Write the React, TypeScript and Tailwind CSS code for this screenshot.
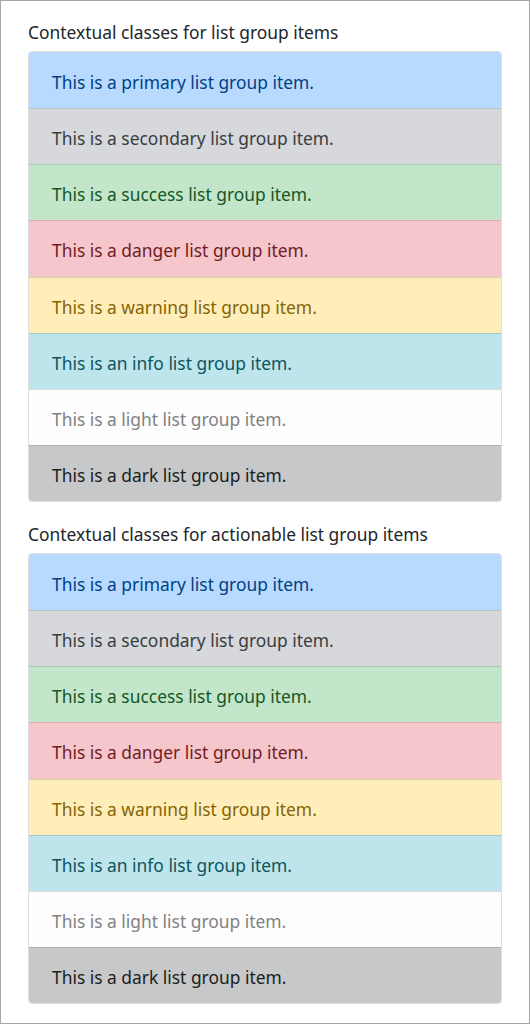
import React from "react";

const items = [
  { label: "This is a primary list group item.", cls: "bg-[#b8daff] text-[#004085]" },
  { label: "This is a secondary list group item.", cls: "bg-[#d6d8db] text-[#383d41]" },
  { label: "This is a success list group item.", cls: "bg-[#c3e6cb] text-[#155724]" },
  { label: "This is a danger list group item.", cls: "bg-[#f5c6cb] text-[#721c24]" },
  { label: "This is a warning list group item.", cls: "bg-[#ffeeba] text-[#856404]" },
  { label: "This is an info list group item.", cls: "bg-[#bee5eb] text-[#0c5460]" },
  { label: "This is a light list group item.", cls: "bg-[#fdfdfe] text-[#818182]" },
  { label: "This is a dark list group item.", cls: "bg-[#c6c8ca] text-[#1b1e21]" },
];

function Group({ title }: { title: string }) {
  return (
    <div>
      <h5 className="h-[24px] leading-[24px] text-[17.4px] text-[#212529] mb-[7px]">{title}</h5>
      <div className="flex flex-col rounded-[4px] overflow-hidden border border-black/[0.125]">
        {items.map((it, i) => (
          <div
            key={i}
            className={`h-[56.125px] flex items-center pt-[3px] px-[23px] text-[17.4px] ${it.cls} ${i > 0 ? "border-t border-black/[0.125]" : ""}`}
          >
            {it.label}
          </div>
        ))}
      </div>
    </div>
  );
}

export default function App() {
  return (
    <div
      className="w-[530px] h-[1024px] border border-[#a6a6a6] bg-white pl-[27px] pr-[27px] pt-[19px] flex flex-col gap-[20px]"
      style={{ fontFamily: '"Noto Sans", "Open Sans", sans-serif' }}
    >
      <Group title="Contextual classes for list group items" />
      <Group title="Contextual classes for actionable list group items" />
    </div>
  );
}
